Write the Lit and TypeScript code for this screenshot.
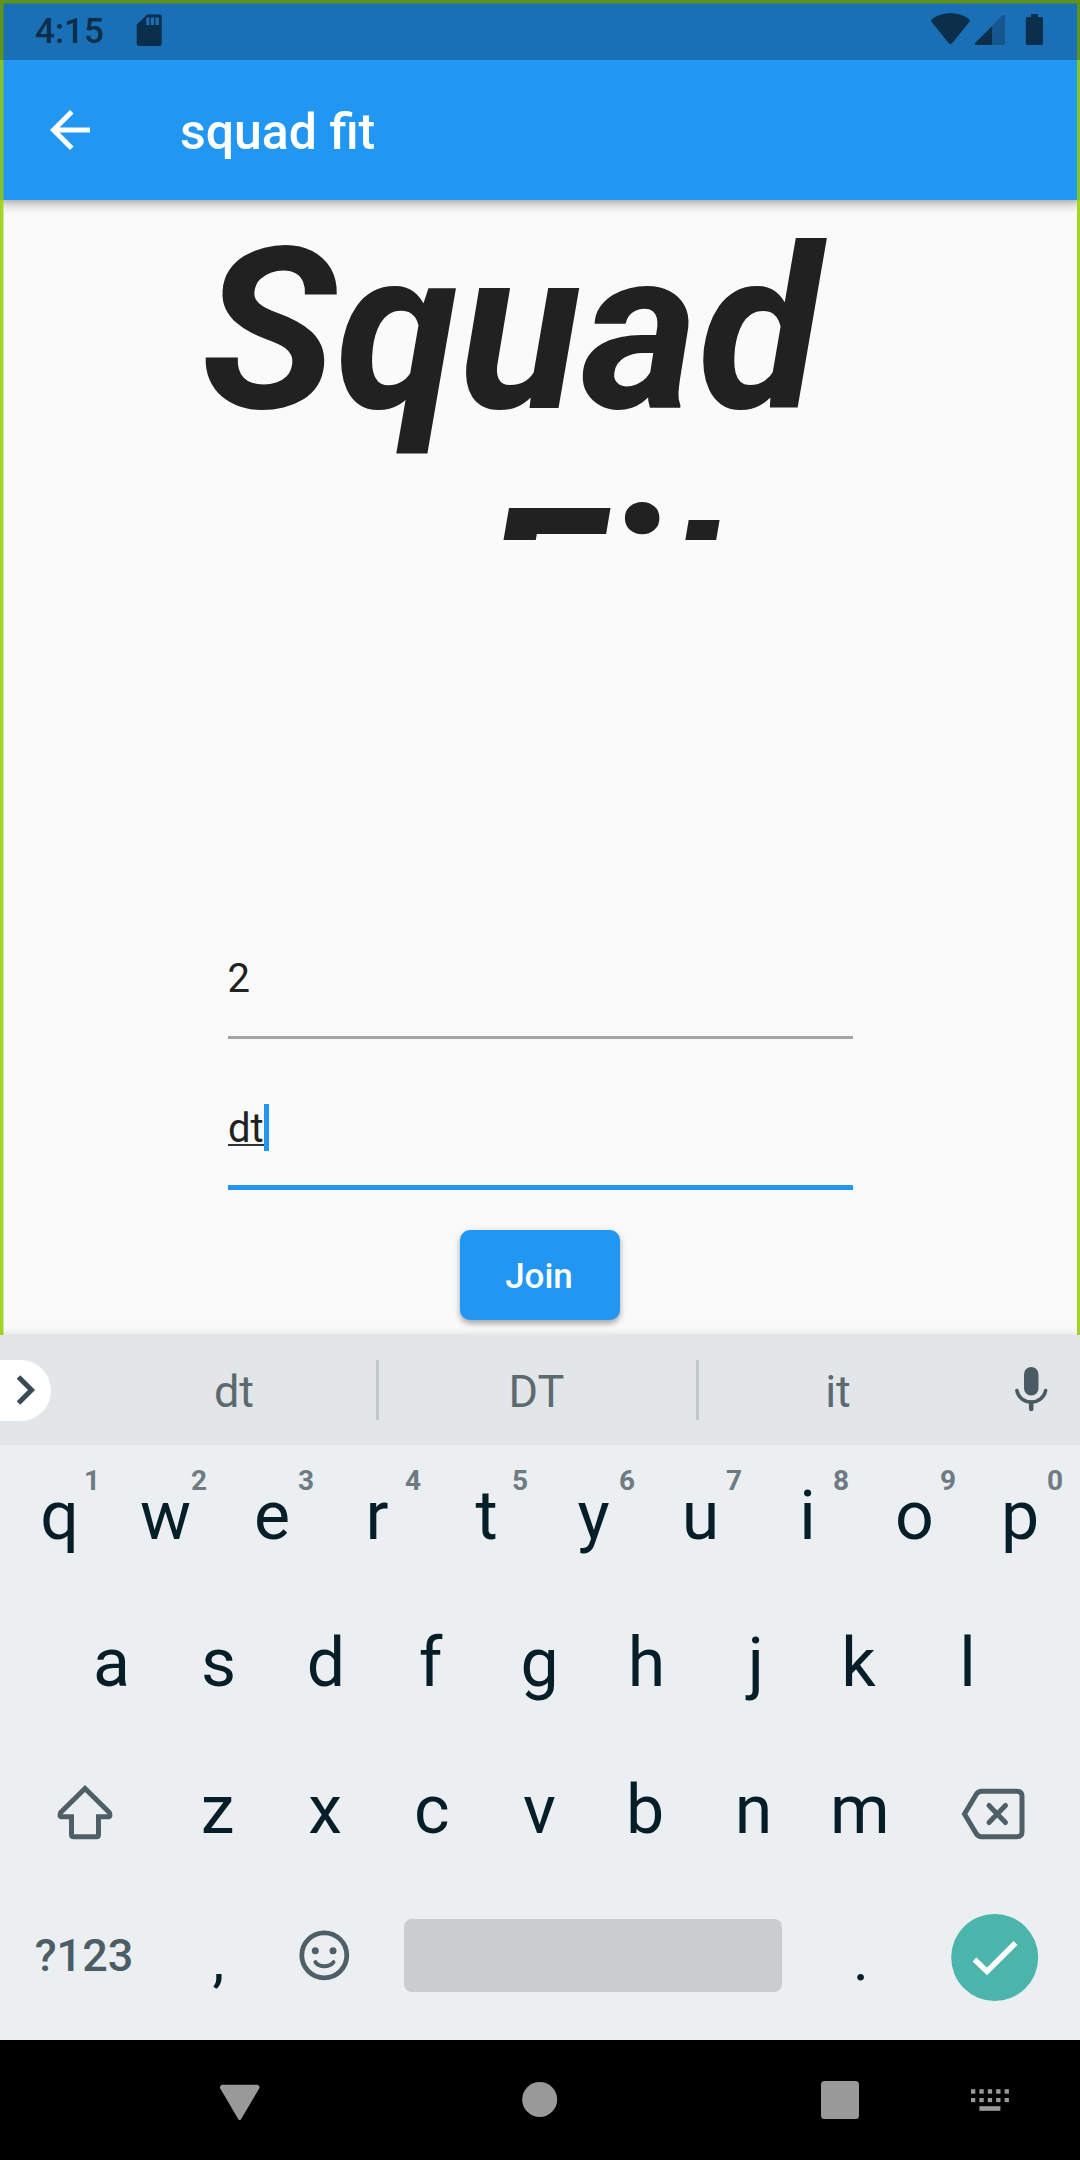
import { LitElement, html, css, svg } from "lit";
import { customElement, property } from "lit/decorators.js";

const TOP_ROW: [string, string][] = [
  ["q", "1"], ["w", "2"], ["e", "3"], ["r", "4"], ["t", "5"],
  ["y", "6"], ["u", "7"], ["i", "8"], ["o", "9"], ["p", "0"],
];
const HOME_ROW = ["a", "s", "d", "f", "g", "h", "j", "k", "l"];
const BOTTOM_ROW = ["z", "x", "c", "v", "b", "n", "m"];

// Horizontal correction, in pixels, that centres a glyph by its ink.
const INK_SHIFT: Record<string, number> = {
  q: 1.2, r: -2.5, p: -1.5, d: 0.5, f: -2, j: 2.5, k: -2,
  z: -0.8, x: -0.5, c: -0.8, b: -1.5, m: -0.6, e: -0.5,
};

@customElement("status-bar")
class StatusBar extends LitElement {
  static styles = css`
    :host {
      display: flex;
      align-items: flex-start;
      justify-content: space-between;
      height: 60px;
      box-sizing: border-box;
      padding: 0 36px 0 35px;
      background: #1a70b7;
      color: #0b2e4a;
    }
    .left, .right { display: flex; }
    .time { font-size: 35px; line-height: 41px; font-weight: 500; padding-top: 11px; width: 101px; }
    svg { display: block; fill: currentColor; }
    .sd { margin-top: 14px; }
    .right { padding-top: 13px; }
    .signal { margin-left: 5px; }
    .battery { margin-left: 19px; }
  `;
  render() {
    return html`
      <div class="left">
        <span class="time">4:15</span>
        <svg class="sd" width="26" height="33" viewBox="0 0 26 33">
          <path fill-rule="evenodd" d="M11 .5H23q2.7 0 2.7 2.7V29.500q0 2.500-2.700 2.500H3.200Q.7 32 .7 29.500V10.800ZM10.200 3.500V11h3.200V3.500ZM14.800 3.500V11h3.200V3.500ZM19.400 3.500V11h3.400V3.500Z"/>
        </svg>
      </div>
      <div class="right">
        <svg width="39" height="33" viewBox="0 0 39 33">
          <path d="M19.500 .3C12.500 .3 5.800 2.400.9 6.200Q-.5 7.400.5 8.800L17.800 30.300Q19.500 31.900 21.200 30.300L38.500 8.800Q39.500 7.400 38.100 6.200C33.200 2.400 26.500 .3 19.500 .3Z"/>
        </svg>
        <svg class="signal" width="31" height="33" viewBox="0 0 31 33">
          <path fill="#15568d" d="M17 13.200 27.200 2.500Q30 .7 30 3.800V30.500Q30 32 28.500 32H17Z"/>
          <path d="M17 13.200V32H1.500Q-1 31.500.5 29.500Z"/>
        </svg>
        <svg class="battery" width="19" height="33" viewBox="0 0 19 33">
          <path d="M6.200 1H13V4H16.500Q18 4 18 5.500V30.500Q18 32 16.500 32H2.300Q.8 32 .8 30.500V5.500Q.8 4 2.300 4H6.200Z"/>
        </svg>
      </div>
    `;
  }
}

@customElement("app-bar")
class AppBar extends LitElement {
  @property() heading = "";
  static styles = css`
    :host {
      display: flex;
      align-items: center;
      height: 140px;
      box-sizing: border-box;
      padding-left: 40px;
      background: #2196f3;
      color: #fff;
      box-shadow: 0 5px 10px rgba(0, 0, 0, 0.2), 0 1px 12px rgba(0, 0, 0, 0.12), 0 2px 4px rgba(0, 0, 0, 0.08);
      position: relative;
      clip-path: inset(0 0 -40px 0);
    }
    svg { display: block; fill: #fff; width: 60px; height: 60px; }
    h1 { margin: 3px 0 0 80px; font-size: 50px; line-height: 60px; font-weight: 500; }
  `;
  render() {
    return html`
      <svg viewBox="0 0 24 24"><path d="M20 11H7.830l5.590-5.590L12 4l-8 8 8 8 1.410-1.410L7.830 13H20v-2z"/></svg>
      <h1>${this.heading}</h1>
    `;
  }
}

@customElement("join-form")
class JoinForm extends LitElement {
  static styles = css`
    :host {
      display: flex;
      flex-direction: column;
      align-items: center;
      height: 1135px;
      background: #fafafa;
      color: #212121;
      overflow: hidden;
    }
    .logo {
      width: 680px;
      height: 340px;
      overflow: hidden;
      font-size: 225px;
      line-height: 262px;
      font-weight: 700;
      font-style: italic;
    }
    .word { display: block; height: 261px; }
    .first { padding-left: 1.500px; }
    .second { padding-left: 279px; }
    .fields { width: 625px; margin-top: 396px; }
    .field { box-sizing: border-box; font-size: 40px; line-height: 47px; display: flex; }
    .idle { height: 103px; padding-top: 19px; border-bottom: 3px solid #a3a3a3; }
    .active { height: 101px; margin-top: 50px; padding-top: 16px; border-bottom: 5px solid #2196f3; margin-bottom: 40px; }
    .composing { border-bottom: 2px solid #333; height: 39px; line-height: 47px; padding-left: 0.500px; }
    .caret { width: 5px; height: 47px; background: #2196f3; margin-top: -1px; }
    button {
      font: 500 35px/41px Roboto, "Liberation Sans", sans-serif;
      color: #fff;
      background: #2196f3;
      border: 0;
      border-radius: 10px;
      width: 160px;
      height: 90px;
      padding: 3px 2px 0 0;
      box-shadow: 0 4px 5px rgba(0, 0, 0, 0.22), 0 2px 8px rgba(0, 0, 0, 0.16);
    }
  `;
  render() {
    return html`
      <div class="logo"><span class="word first">Squad</span><span class="word second">Fit</span></div>
      <div class="fields">
        <div class="field idle">2</div>
        <div class="field active"><span class="composing">dt</span><span class="caret"></span></div>
      </div>
      <button>Join</button>
    `;
  }
}

@customElement("soft-keyboard")
class SoftKeyboard extends LitElement {
  static styles = css`
    :host { display: block; height: 705px; background: #ebeff2; color: #061e28; position: relative; box-shadow: 0 -1px 8px rgba(0, 0, 0, 0.12); }
    svg { display: block; }
    .strip { height: 110px; display: flex; align-items: center; background: #e2e6e9; color: #5c6a70; font-size: 45px; line-height: 53px; }
    .expand { width: 51px; height: 61px; margin-right: 39px; background: #fff; border-radius: 0 31px 31px 0; }
    .word { flex: none; width: 286px; text-align: center; box-sizing: border-box; padding-top: 3px; }
    .candidate { padding-left: 2px; }
    .middle { width: 317px; padding-right: 2px; }
    .last { width: 279px; padding-right: 1px; }
    .rule { width: 3px; height: 60px; background: #c2c7ca; }
    .mic { margin: -3px 0 0 35px; }
    .row { display: flex; height: 147px; padding: 0 5px; font-size: 68px; line-height: 80px; }
    .home { padding: 0 58px; }
    .key { width: 107px; text-align: center; position: relative; box-sizing: border-box; padding-top: 31px; }
    .hint { position: absolute; right: 0; top: 19px; width: 40px; font-size: 28px; line-height: 33px; font-weight: 700; color: #6e7b82; text-indent: 0; }
    .wide { width: 160px; display: flex; justify-content: center; flex: none; }
    .symbols { font-size: 45px; line-height: 53px; font-weight: 500; color: #4c5d66; padding: 43px 2px 0 0; box-sizing: border-box; }
    .shift { padding-top: 45px; }
    .delete { padding: 49px 2px 0 0; box-sizing: border-box; }
    .emoji { width: 107px; padding: 44px 0 0 27px; box-sizing: border-box; }
    .punct { font-size: 60px; line-height: 70px; padding-top: 39px; }
    .space { width: 378px; height: 73px; border-radius: 8px; background: #c9cdd0; margin: 33px 26px 0 24.500px; }
    .enter { padding-top: 28px; }
  `;
  private key(label: string, hint = "") {
    const shift = INK_SHIFT[label] ?? 0;
    return html`<span class="key" style="text-indent: ${shift * 2}px">${label}${hint ? html`<span class="hint">${hint}</span>` : ""}</span>`;
  }
  render() {
    return html`
      <div class="strip">
        <div class="expand">
          <svg width="51" height="61" viewBox="0 0 51 61"><path d="M18.500 17 31.500 30 18.500 43" fill="none" stroke="#3a4a55" stroke-width="5"/></svg>
        </div>
        <span class="word candidate">dt</span><span class="rule"></span>
        <span class="word middle">DT</span><span class="rule"></span>
        <span class="word last">it</span>
        <svg class="mic" width="36" height="46" viewBox="0 0 36 46" fill="none" stroke="#4a5b64" stroke-linecap="round">
          <rect x="11" y="1" width="14.500" height="28.500" rx="7.200" fill="#4a5b64" stroke="none"/>
          <path d="M3.900 24.500C5 31.500 11 36 18.200 36S31.400 31.500 32.600 24.500" stroke-width="3.600"/>
          <path d="M18.200 36.500V43" stroke-width="4.600"/>
        </svg>
      </div>
      <div class="row">${TOP_ROW.map(([l, h]) => this.key(l, h))}</div>
      <div class="row home">${HOME_ROW.map((l) => this.key(l))}</div>
      <div class="row">
        <span class="wide shift">
          <svg width="56" height="56" viewBox="0 0 56 56" fill="none" stroke="#4f5f67" stroke-width="5">
            <path d="M28 4.500 3.700 28.500Q1.800 32.700 5 32.700H14.500V50.500Q14.500 52.700 16.500 52.700H39.500Q41.500 52.700 41.500 50.500V32.700H51Q54.200 32.700 52.300 28.500Z"/>
          </svg>
        </span>
        ${BOTTOM_ROW.map((l) => this.key(l))}
        <span class="wide delete">
          <svg width="64" height="52" viewBox="0 0 64 52" fill="none" stroke="#4f5f67" stroke-width="5">
            <path d="M3.500 26 15.500 6Q17.500 3.300 20.500 3.300H56Q61 3.300 61 8.300V43.700Q61 48.700 56 48.700H20.500Q17.500 48.700 15.500 46Z"/>
            <path d="M28 17.500 44.500 34.500M44.500 17.500 28 34.500" stroke-linecap="round"/>
          </svg>
        </span>
      </div>
      <div class="row">
        <span class="wide symbols">?123</span>
        <span class="key punct">,</span>
        <span class="emoji">
          <svg width="51" height="51" viewBox="0 0 51 51" fill="none" stroke="#4f5f67">
            <circle cx="25.300" cy="25.300" r="22.500" stroke-width="4.800"/>
            <circle cx="16.300" cy="20.700" r="3.500" fill="#4f5f67" stroke="none"/>
            <circle cx="34" cy="20.700" r="3.500" fill="#4f5f67" stroke="none"/>
            <path d="M16.500 32.200C20.500 37.500 30 37.500 34.500 32.200" stroke-width="4" stroke-linecap="round"/>
          </svg>
        </span>
        <span class="space"></span>
        <span class="key punct">.</span>
        <span class="wide enter">
          <svg width="88" height="88" viewBox="0 0 88 88">
            <circle cx="43.700" cy="43.500" r="43.500" fill="#4cb5ab"/>
            <path d="M23.500 45.500 36 57.500 64.500 29" fill="none" stroke="#fff" stroke-width="5.500"/>
          </svg>
        </span>
      </div>
    `;
  }
}

@customElement("nav-bar")
class NavBar extends LitElement {
  static styles = css`
    :host { display: flex; align-items: flex-start; height: 120px; box-sizing: border-box; padding: 40px 0 0 219px; background: #000; }
    svg { display: block; fill: #999; }
    .back { margin-top: 4px; }
    .home { margin: 2px 0 0 262px; }
    .recents { margin: 1px 0 0 263px; }
    .keys { margin: 8px 0 0 112px; }
  `;
  render() {
    const columns = [0, 1, 2, 3, 4];
    return html`
      <svg class="back" width="41" height="37" viewBox="0 0 41 37"><path d="M3 .8H38.500Q41 1.500 40.500 4L22 35.200Q20.700 37 19.300 35.200L1 4Q.5 1.500 3 .8Z"/></svg>
      <svg class="home" width="36" height="36" viewBox="0 0 36 36"><circle cx="17.700" cy="17.500" r="17.500"/></svg>
      <svg class="recents" width="38" height="38" viewBox="0 0 38 38"><rect width="38" height="38" rx="3.500"/></svg>
      <svg class="keys" width="38" height="24" viewBox="0 0 38 24">
        ${columns.map((c) => svg`<rect x=${c * 8.4} y="1.200" width="4.300" height="4.500"/><rect x=${c * 8.4} y="10" width="4.300" height="4.200"/>`)}
        <rect x="8.400" y="18.200" width="21" height="4.600"/>
      </svg>
    `;
  }
}

@customElement("app-root")
class AppRoot extends LitElement {
  static styles = css`
    :host {
      display: block;
      position: relative;
      width: 1080px;
      height: 2160px;
      overflow: hidden;
      font-family: Roboto, "Liberation Sans", sans-serif;
    }
    .frame {
      position: absolute;
      left: 0;
      top: 0;
      width: 1080px;
      height: 1335px;
      pointer-events: none;
      --edge: linear-gradient(#5f9320 60px, #82c52a 60px, #82c52a 200px, #a5d524 200px);
      background: linear-gradient(#5f9320, #5f9320) top / 100% 3.500px no-repeat, var(--edge) left / 3.500px 100% no-repeat, var(--edge) right / 3.500px 100% no-repeat;
    }
    soft-keyboard { z-index: 1; }
  `;
  render() {
    return html`
      <status-bar></status-bar>
      <app-bar heading="squad fit"></app-bar>
      <join-form></join-form>
      <div class="frame"></div>
      <soft-keyboard></soft-keyboard>
      <nav-bar></nav-bar>
    `;
  }
}
